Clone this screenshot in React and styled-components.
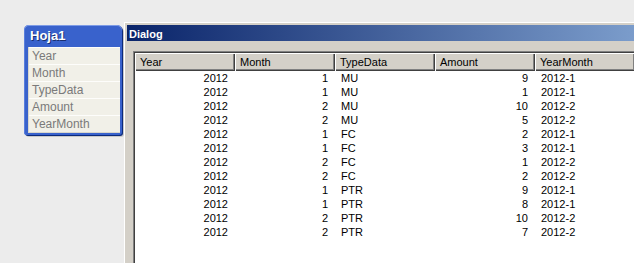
import React from "react";
import styled, { createGlobalStyle } from "styled-components";

const rows = [
  [2012, 1, "MU", 9, "2012-1"],
  [2012, 1, "MU", 1, "2012-1"],
  [2012, 2, "MU", 10, "2012-2"],
  [2012, 2, "MU", 5, "2012-2"],
  [2012, 1, "FC", 2, "2012-1"],
  [2012, 1, "FC", 3, "2012-1"],
  [2012, 2, "FC", 1, "2012-2"],
  [2012, 2, "FC", 2, "2012-2"],
  [2012, 1, "PTR", 9, "2012-1"],
  [2012, 1, "PTR", 8, "2012-1"],
  [2012, 2, "PTR", 10, "2012-2"],
  [2012, 2, "PTR", 7, "2012-2"],
];

const columns = [
  { name: "Year", align: "right" },
  { name: "Month", align: "right" },
  { name: "TypeData", align: "left" },
  { name: "Amount", align: "right" },
  { name: "YearMonth", align: "left" },
];

const fields = ["Year", "Month", "TypeData", "Amount", "YearMonth"];

function App() {
  return (
    <>
      <GlobalStyle />
      <Page>
        <TableBox>
          <BoxTitle>Hoja1</BoxTitle>
          <FieldList>
            {fields.map((f) => (
              <Field key={f}>{f}</Field>
            ))}
          </FieldList>
        </TableBox>
        <Dialog>
          <Caption>Dialog</Caption>
          <ListView>
            <Grid>
              {columns.map((c) => (
                <HeaderCell key={c.name}>{c.name}</HeaderCell>
              ))}
              <HeaderCell />
              {rows.map((r, i) => (
                <React.Fragment key={i}>
                  {r.map((v, j) => (
                    <Cell key={j} $align={columns[j].align}>
                      {v}
                    </Cell>
                  ))}
                  <span />
                </React.Fragment>
              ))}
            </Grid>
          </ListView>
        </Dialog>
      </Page>
    </>
  );
}

export default App;

const GlobalStyle = createGlobalStyle`
  html, body {
    margin: 0;
    padding: 0;
    overflow: hidden;
    background: #ececec;
    font-family: "Liberation Sans", Arial, sans-serif;
  }
`;

const Page = styled.div`
  width: 634px;
  height: 263px;
  overflow: hidden;
  display: flex;
  align-items: flex-start;
`;

const TableBox = styled.div`
  flex: none;
  margin: 25px 0 0 24px;
  width: 92px;
  padding: 0 2px 2px 4px;
  background: #3962cc;
  border-radius: 5px 5px 3px 3px;
  box-shadow: inset 0 1px 0 #7d9be6, inset 1px 0 0 #5a7fdc,
    1px 1px 0 #0c2a7a, 2px 2px 0 #c8c8c8;
`;

const BoxTitle = styled.div`
  height: 22px;
  line-height: 22px;
  padding-left: 2px;
  color: #fff;
  font-weight: bold;
  font-size: 13px;
  text-shadow: 1px 1px 0 #1a2f70;
`;

const FieldList = styled.div`
  display: flex;
  flex-direction: column;
  background: #f1f0e8;
  border-left: 1px solid #d8d6cc;
  border-bottom: 1px solid #d8d6cc;
`;

const Field = styled.div`
  height: 16px;
  line-height: 17px;
  padding-left: 3px;
  font-size: 12px;
  color: #7a7a7a;
  border-top: 1px solid #fdfdfb;
`;

const Dialog = styled.div`
  flex: none;
  margin: 22px 0 0 2px;
  width: 700px;
  height: 300px;
  background: #d4d0c8;
  border-top: 1px solid #fff;
  border-left: 1px solid #fff;
  padding: 2px;
  display: flex;
  flex-direction: column;
`;

const Caption = styled.div`
  height: 15px;
  padding: 1px 0 0 2px;
  line-height: 17px;
  color: #fff;
  font-weight: bold;
  font-size: 11px;
  background: linear-gradient(to right, #0a246a, #a6caf0);
`;

const ListView = styled.div`
  flex: 1;
  margin: 10px 0 0 6px;
  background: #fff;
  border-top: 1px solid #808080;
  border-left: 1px solid #808080;
  box-shadow: inset 1px 1px 0 #404040;
  padding: 1px 0 0 1px;
`;

const Grid = styled.div`
  display: grid;
  grid-template-columns: repeat(5, 100px) 1fr;
  grid-auto-rows: 14px;
  grid-template-rows: 18px;
  font-size: 11px;
  color: #000;
`;

const HeaderCell = styled.div`
  background: #d4d0c8;
  padding: 1px 0 0 5px;
  line-height: 16px;
  box-shadow: inset 1px 1px 0 #fff, inset -1px -1px 0 #404040,
    inset -2px -2px 0 #808080;
  white-space: nowrap;
  overflow: hidden;
`;

const Cell = styled.div`
  line-height: 15px;
  text-align: ${(p) => p.$align};
  padding: 0 7px 0 6px;
  white-space: nowrap;
`;
